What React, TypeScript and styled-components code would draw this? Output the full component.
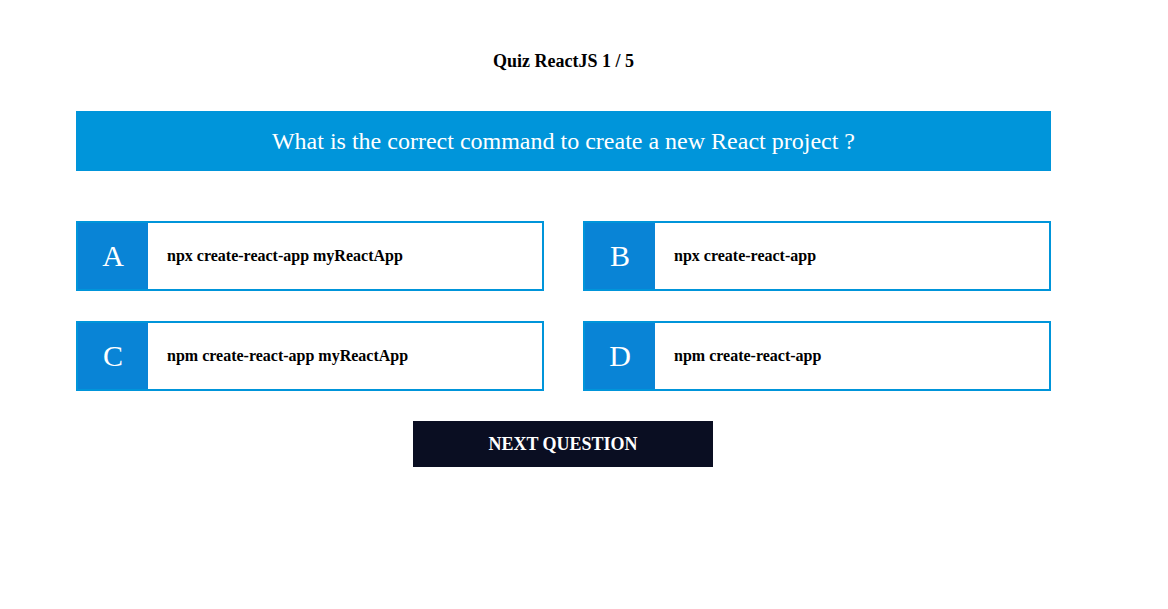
import React from 'react';
import styled, { createGlobalStyle } from 'styled-components';

const GlobalStyle = createGlobalStyle`
  body {
    margin: 0;
    background: #ffffff;
    font-family: "Liberation Serif", "Times New Roman", serif;
  }
`;

const options = [
  { letter: 'A', text: 'npx create-react-app myReactApp' },
  { letter: 'B', text: 'npx create-react-app' },
  { letter: 'C', text: 'npm create-react-app myReactApp' },
  { letter: 'D', text: 'npm create-react-app' },
];

export default function App() {
  return (
    <>
      <GlobalStyle />
      <QuizContainer>
        <Title>Quiz ReactJS 1 / 5</Title>
        <Question>What is the correct command to create a new React project ?</Question>
        <OptionsGrid>
          {options.map((option) => (
            <OptionCard key={option.letter}>
              <Letter>{option.letter}</Letter>
              <OptionText>{option.text}</OptionText>
            </OptionCard>
          ))}
        </OptionsGrid>
        <NextButton>NEXT QUESTION</NextButton>
      </QuizContainer>
    </>
  );
}

const QuizContainer = styled.div`
  width: 975px;
  margin-left: 76px;
  padding-top: 51px;
  display: flex;
  flex-direction: column;
  align-items: center;
`;

const Title = styled.h3`
  margin: 0;
  font-size: 18px;
  line-height: 20px;
  font-weight: bold;
  color: #000;
`;

const Question = styled.div`
  margin-top: 40px;
  width: 100%;
  height: 60px;
  background: #0095da;
  color: #fff;
  font-size: 24px;
  display: flex;
  align-items: center;
  justify-content: center;
`;

const OptionsGrid = styled.div`
  margin-top: 50px;
  width: 100%;
  display: grid;
  grid-template-columns: 1fr 1fr;
  column-gap: 39px;
  row-gap: 30px;
`;

const OptionCard = styled.div`
  height: 70px;
  box-sizing: border-box;
  border: 2px solid #0095da;
  display: flex;
  align-items: stretch;
  cursor: pointer;
`;

const Letter = styled.div`
  width: 70px;
  background: #0984d6;
  color: #fff;
  font-size: 30px;
  display: flex;
  align-items: center;
  justify-content: center;
`;

const OptionText = styled.div`
  padding-left: 19px;
  font-size: 16px;
  font-weight: bold;
  color: #000;
  display: flex;
  align-items: center;
`;

const NextButton = styled.button`
  margin-top: 30px;
  margin-left: -1px;
  width: 300px;
  height: 46px;
  border: none;
  background: #0a0e22;
  color: #fff;
  font-family: "Liberation Serif", "Times New Roman", serif;
  font-size: 18px;
  font-weight: bold;
  cursor: pointer;
`;
